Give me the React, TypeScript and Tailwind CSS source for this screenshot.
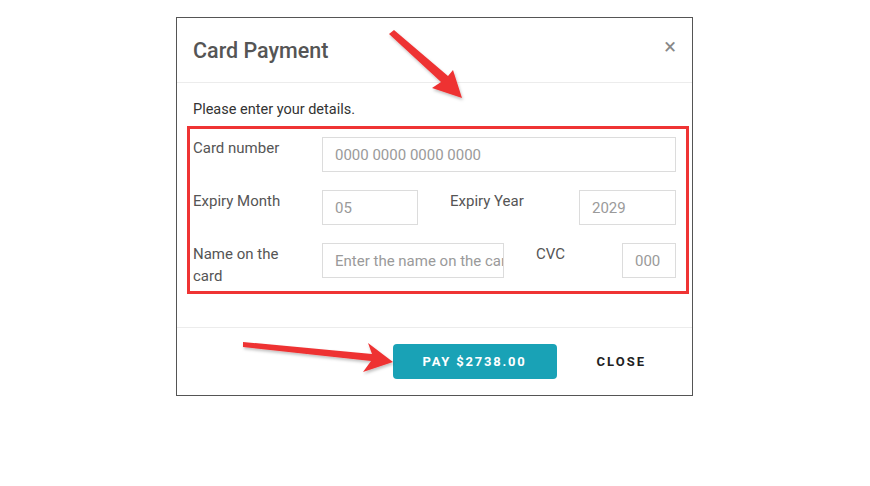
import React from "react";

const font = { fontFamily: "Roboto, 'Liberation Sans', sans-serif" };

const Field = ({ placeholder, width }: { placeholder: string; width: string }) => (
  <input
    readOnly
    placeholder={placeholder}
    className={`${width} h-[35px] border border-[#dcdcdc] bg-white pl-[12px] text-[15px] text-[#333] placeholder:text-[#9a9a9a] outline-none`}
  />
);

const Label = ({ children, width }: { children: React.ReactNode; width: string }) => (
  <div className={`${width} shrink-0 text-[15px] leading-[22px] text-[#555]`}>{children}</div>
);

export default function App() {
  return (
    <div className="relative w-[870px] h-[486px] bg-white overflow-hidden" style={font}>
      <div className="ml-[176px] mt-[17px] w-[517px] border border-[#555] bg-white">
        {/* Header */}
        <div className="h-[65px] flex items-center justify-between pl-[16px] pr-[16px] border-b border-[#ececec]">
          <h2 className="mt-[3px] text-[21.5px] font-medium text-[#555]">Card Payment</h2>
          <span className="-mt-[6px] text-[22px] leading-none text-[#888]">×</span>
        </div>

        {/* Body */}
        <div className="pt-[17px] pb-[33px]">
          <p className="pl-[16px] text-[14.5px] leading-[20px] text-[#333]">Please enter your details.</p>
          <div className="mt-[6px] ml-[10px] mr-[3px] border-[3px] border-[#ef3434] pl-[3px] pr-[9px] pt-[8px] pb-[4px] flex flex-col">
            <div className="flex items-start">
              <Label width="w-[129px]">Card number</Label>
              <Field placeholder="0000 0000 0000 0000" width="w-[354px]" />
            </div>
            <div className="flex items-start mt-[18px]">
              <Label width="w-[129px]">Expiry Month</Label>
              <Field placeholder="05" width="w-[96px]" />
              <div className="w-[32px]" />
              <Label width="w-[129px]">Expiry Year</Label>
              <Field placeholder="2029" width="w-[97px]" />
            </div>
            <div className="flex items-start mt-[18px]">
              <Label width="w-[129px]">
                Name on the
                <br />
                card
              </Label>
              <Field placeholder="Enter the name on the card" width="w-[182px]" />
              <div className="w-[32px]" />
              <Label width="w-[86px]">CVC</Label>
              <Field placeholder="000" width="w-[54px]" />
            </div>
          </div>
        </div>

        {/* Footer */}
        <div className="h-[68px] border-t border-[#ececec] flex items-center justify-end pr-[30px] gap-[24px]">
          <button className="w-[164px] h-[35px] rounded-[4px] bg-[#19a2b6] text-white text-[13px] font-bold tracking-[1.8px]">
            PAY $2738.00
          </button>
          <button className="px-[16px] h-[35px] text-[#222] text-[13px] font-bold tracking-[2px]">CLOSE</button>
        </div>
      </div>

      {/* Annotation arrows */}
      <svg className="absolute inset-0 pointer-events-none" width="870" height="486" viewBox="0 0 870 486">
        <defs>
          <filter id="sh" x="-20%" y="-20%" width="140%" height="140%">
            <feDropShadow dx="1" dy="2" stdDeviation="1.5" floodColor="#000" floodOpacity="0.25" />
          </filter>
        </defs>
        <polygon
          points="389,34 394,30 448,76 453,70 462,98 432,88 441,82"
          fill="#ee3333"
          filter="url(#sh)"
        />
        <polygon
          points="243,342 372,354 368,343 393,362 363,372 371,361 243,347"
          fill="#ee3333"
          filter="url(#sh)"
        />
      </svg>
    </div>
  );
}
